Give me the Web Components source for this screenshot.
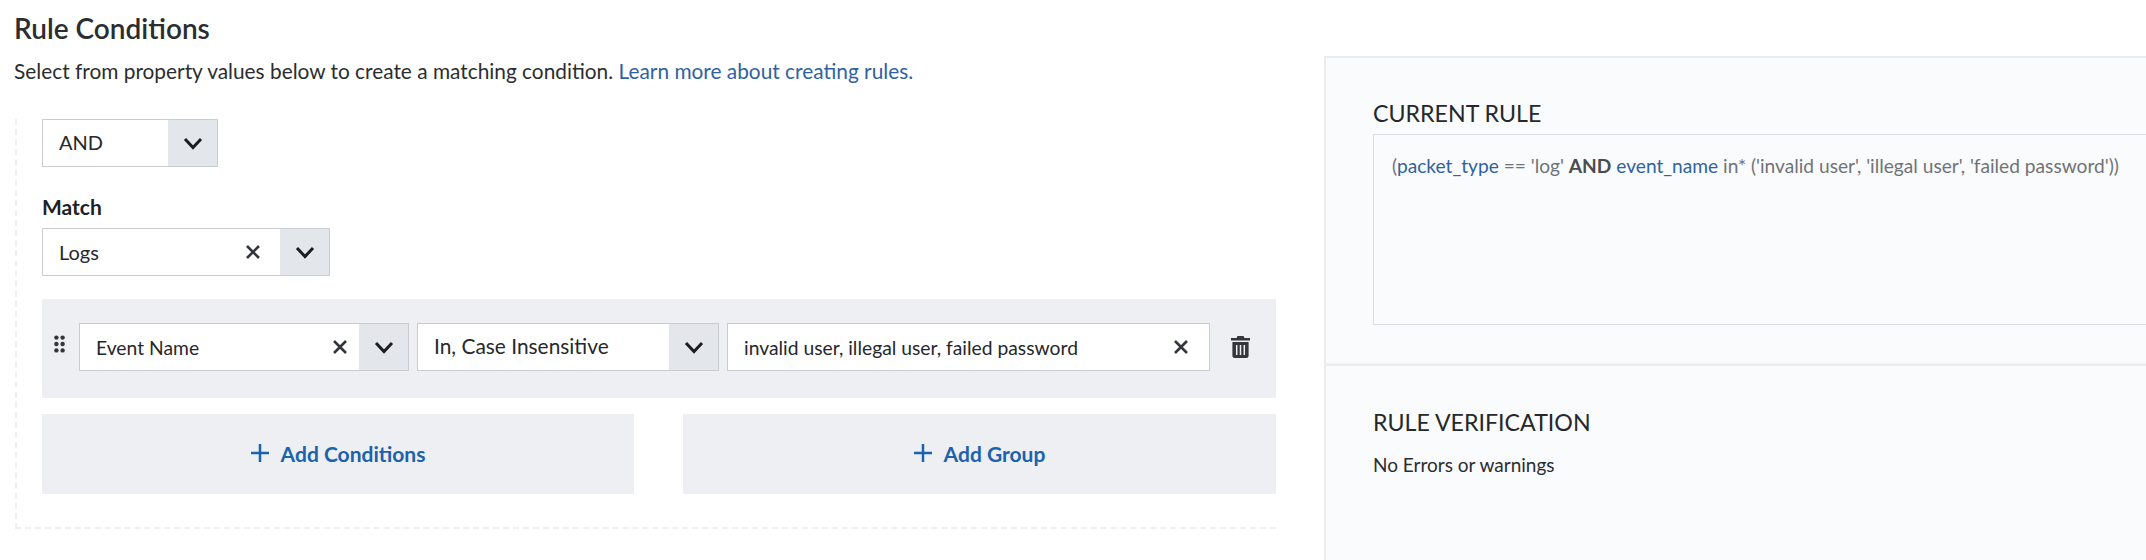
<!DOCTYPE html>
<html>
<head>
<meta charset="utf-8">
<title>Rule Conditions</title>
<style>
  html, body { margin: 0; height: 100%; background: #fff; overflow: hidden; }
  body { font-family: Lato, "Open Sans", sans-serif; color: #26282b; }
</style>
</head>
<body>
<rule-page>
  <rule-builder slot="left">
    <rule-select value="AND" width="176" size="20" line="45"></rule-select>
    <match-block>
      <rule-select value="Logs" width="288" size="20" line="46" clear="19"></rule-select>
    </match-block>
    <condition-row>
      <rule-select value="Event Name" width="330" size="19.3" line="47" clear="11"></rule-select>
      <rule-select value="In, Case Insensitive" width="302" size="20.9" line="44"></rule-select>
      <rule-select value="invalid user, illegal user, failed password" width="483" size="19.3" line="47" clear="20" noarrow></rule-select>
    </condition-row>
    <add-buttons></add-buttons>
  </rule-builder>
  <info-panel slot="right"></info-panel>
</rule-page>

<script>
const ICON_X = `<svg width="16" height="16" viewBox="0 0 16 16" fill="none" stroke="#33363a" stroke-width="2.6"><path d="M2 2l12 12M14 2L2 14"/></svg>`;
const ICON_CHEVRON = `<svg width="20" height="13" viewBox="0 0 20 13" fill="none" stroke="#1b1d20" stroke-width="3"><path d="M2 2l8 8.5L18 2"/></svg>`;

class RulePage extends HTMLElement {
  constructor() {
    super();
    this.attachShadow({ mode: "open" });
  }
  connectedCallback() {
    this.shadowRoot.innerHTML = `
      <style>
        :host { display: flex; height: 560px; }
        .left { width: 1276px; padding: 0 0 0 14px; box-sizing: border-box; flex: none; }
        h1 { margin: 0; padding-top: 13px; font-size: 28px; line-height: 30px; font-weight: 600; color: #2b2d30; }
        p { margin: 0; padding-top: 14px; font-size: 20.85px; line-height: 28px; color: #2b2d30; }
        a { color: #2f629f; text-decoration: none; }
        .right { flex: 1; min-width: 0; margin-left: 48px; padding-top: 56px; }
      </style>
      <div class="left">
        <h1>Rule Conditions</h1>
        <p>Select from property values below to create a matching condition. <a href="#">Learn more about creating rules.</a></p>
        <slot name="left"></slot>
      </div>
      <div class="right"><slot name="right"></slot></div>
    `;
  }
}
customElements.define("rule-page", RulePage);

class RuleBuilder extends HTMLElement {
  constructor() {
    super();
    this.attachShadow({ mode: "open" });
  }
  connectedCallback() {
    this.shadowRoot.innerHTML = `
      <style>
        :host {
          display: block; margin: 34px 0 0 1px; height: 410px; box-sizing: border-box;
          border-left: 2px dashed #eeeff1; border-bottom: 2px dashed #eeeff1;
          padding-left: 25px;
        }
      </style>
      <slot></slot>
    `;
  }
}
customElements.define("rule-builder", RuleBuilder);

class RuleSelect extends HTMLElement {
  constructor() {
    super();
    this.attachShadow({ mode: "open" });
  }
  connectedCallback() {
    const clear = this.getAttribute("clear");
    const noarrow = this.hasAttribute("noarrow");
    this.shadowRoot.innerHTML = `
      <style>
        :host {
          display: flex; flex: none; height: 48px; box-sizing: border-box; width: ${this.getAttribute("width")}px;
          background: #fff; border: 1.5px solid #c9ccd0; font-size: ${this.getAttribute("size")}px; color: #26282b;
        }
        .value { flex: 1; padding-left: 16px; line-height: ${this.getAttribute("line")}px; white-space: nowrap; overflow: hidden; }
        .clear { display: flex; align-items: center; padding-right: ${clear}px; }
        .arrow { width: 49px; display: flex; align-items: center; justify-content: center; background: #e3e6ea; flex: none; }
      </style>
      <span class="value">${this.getAttribute("value")}</span>
      ${clear ? `<span class="clear">${ICON_X}</span>` : ""}
      ${noarrow ? "" : `<span class="arrow">${ICON_CHEVRON}</span>`}
    `;
  }
}
customElements.define("rule-select", RuleSelect);

class MatchBlock extends HTMLElement {
  constructor() {
    super();
    this.attachShadow({ mode: "open" });
  }
  connectedCallback() {
    this.shadowRoot.innerHTML = `
      <style>
        :host { display: block; padding-top: 26px; }
        label { display: block; font-size: 21px; line-height: 28px; font-weight: 700; color: #1f2124; margin-bottom: 7px; }
      </style>
      <label>Match</label>
      <slot></slot>
    `;
  }
}
customElements.define("match-block", MatchBlock);

class ConditionRow extends HTMLElement {
  constructor() {
    super();
    this.attachShadow({ mode: "open" });
  }
  connectedCallback() {
    this.shadowRoot.innerHTML = `
      <style>
        :host {
          display: flex; align-items: flex-start; margin-top: 23px; height: 99px; box-sizing: border-box;
          padding-top: 24px; background: #edeff2;
        }
        .grip { width: 37px; flex: none; display: flex; justify-content: center; padding-top: 12px; padding-right: 3px; box-sizing: border-box; }
        .items { display: flex; gap: 8px; }
        .trash { flex: 1; display: flex; justify-content: center; padding-top: 13px; padding-right: 5px; }
      </style>
      <span class="grip">
        <svg width="11" height="18" viewBox="0 0 11 18" fill="#33363a">
          <circle cx="2.4" cy="2.6" r="2.2"/><circle cx="8.6" cy="2.6" r="2.2"/>
          <circle cx="2.4" cy="9" r="2.2"/><circle cx="8.6" cy="9" r="2.2"/>
          <circle cx="2.4" cy="15.4" r="2.2"/><circle cx="8.6" cy="15.4" r="2.2"/>
        </svg>
      </span>
      <span class="items"><slot></slot></span>
      <span class="trash">
        <svg width="19" height="22" viewBox="0 0 19 22">
          <path fill="#33363a" d="M6.5 0h6l1 2H19v2.6H0V2h5.500zM1.400 6h16.200v13.500A2.500 2.500 0 0 1 15.100 22H3.900a2.500 2.500 0 0 1-2.500-2.500z"/>
          <path stroke="#edeff2" stroke-width="1.500" d="M5.700 9v10M9.500 9v10M13.300 9v10"/>
        </svg>
      </span>
    `;
  }
}
customElements.define("condition-row", ConditionRow);

class AddButtons extends HTMLElement {
  constructor() {
    super();
    this.attachShadow({ mode: "open" });
  }
  connectedCallback() {
    const button = (label) => `
      <div class="btn">
        <svg width="18" height="18" viewBox="0 0 18 18" stroke="#1c62ad" stroke-width="2.500"><path d="M9 0v18M0 9h18"/></svg>
        <span>${label}</span>
      </div>`;
    this.shadowRoot.innerHTML = `
      <style>
        :host { display: grid; grid-template-columns: 592px 593px; justify-content: space-between; margin-top: 16px; }
        .btn {
          height: 80px; box-sizing: border-box; padding-bottom: 2px; background: #edeff2;
          display: flex; align-items: center; justify-content: center; gap: 12px;
          font-size: 21px; font-weight: 700; color: #1c62ad;
        }
      </style>
      ${button("Add Conditions")}
      ${button("Add Group")}
    `;
  }
}
customElements.define("add-buttons", AddButtons);

class InfoPanel extends HTMLElement {
  constructor() {
    super();
    this.attachShadow({ mode: "open" });
  }
  connectedCallback() {
    this.shadowRoot.innerHTML = `
      <style>
        :host {
          display: block; height: 504px; box-sizing: border-box; background: #fafbfd;
          border-left: 2px solid #ececee; border-top: 2px solid #ececee; font-size: 19px; color: #2b2d30;
        }
        section { padding-left: 47px; }
        .current { height: 308px; box-sizing: border-box; padding-top: 42px; border-bottom: 2px solid #ececee; box-shadow: inset 0 -1px #f2f3f5; }
        h2 { margin: 0; font-size: 23.2px; line-height: 26px; font-weight: 400; color: #26282b; }
        .rule {
          margin-top: 8px; height: 191px; box-sizing: border-box; padding: 17px 0 0 18px; border: 1.5px solid #dcdee1; border-right: 0;
          font-size: 19.15px; line-height: 28px; color: #707377; white-space: nowrap; overflow: hidden;
        }
        .rule i { font-style: normal; color: #2f629f; }
        .rule b { color: #4a4c4f; }
        .verify { padding-top: 43px; }
        .verify p { margin: 0; padding-top: 16px; line-height: 28px; }
      </style>
      <section class="current">
        <h2>CURRENT RULE</h2>
        <div class="rule">(<i>packet_type</i> == 'log' <b>AND</b> <i>event_name</i> in* ('invalid user', 'illegal user', 'failed password'))</div>
      </section>
      <section class="verify">
        <h2>RULE VERIFICATION</h2>
        <p>No Errors or warnings</p>
      </section>
    `;
  }
}
customElements.define("info-panel", InfoPanel);
</script>
</body>
</html>
